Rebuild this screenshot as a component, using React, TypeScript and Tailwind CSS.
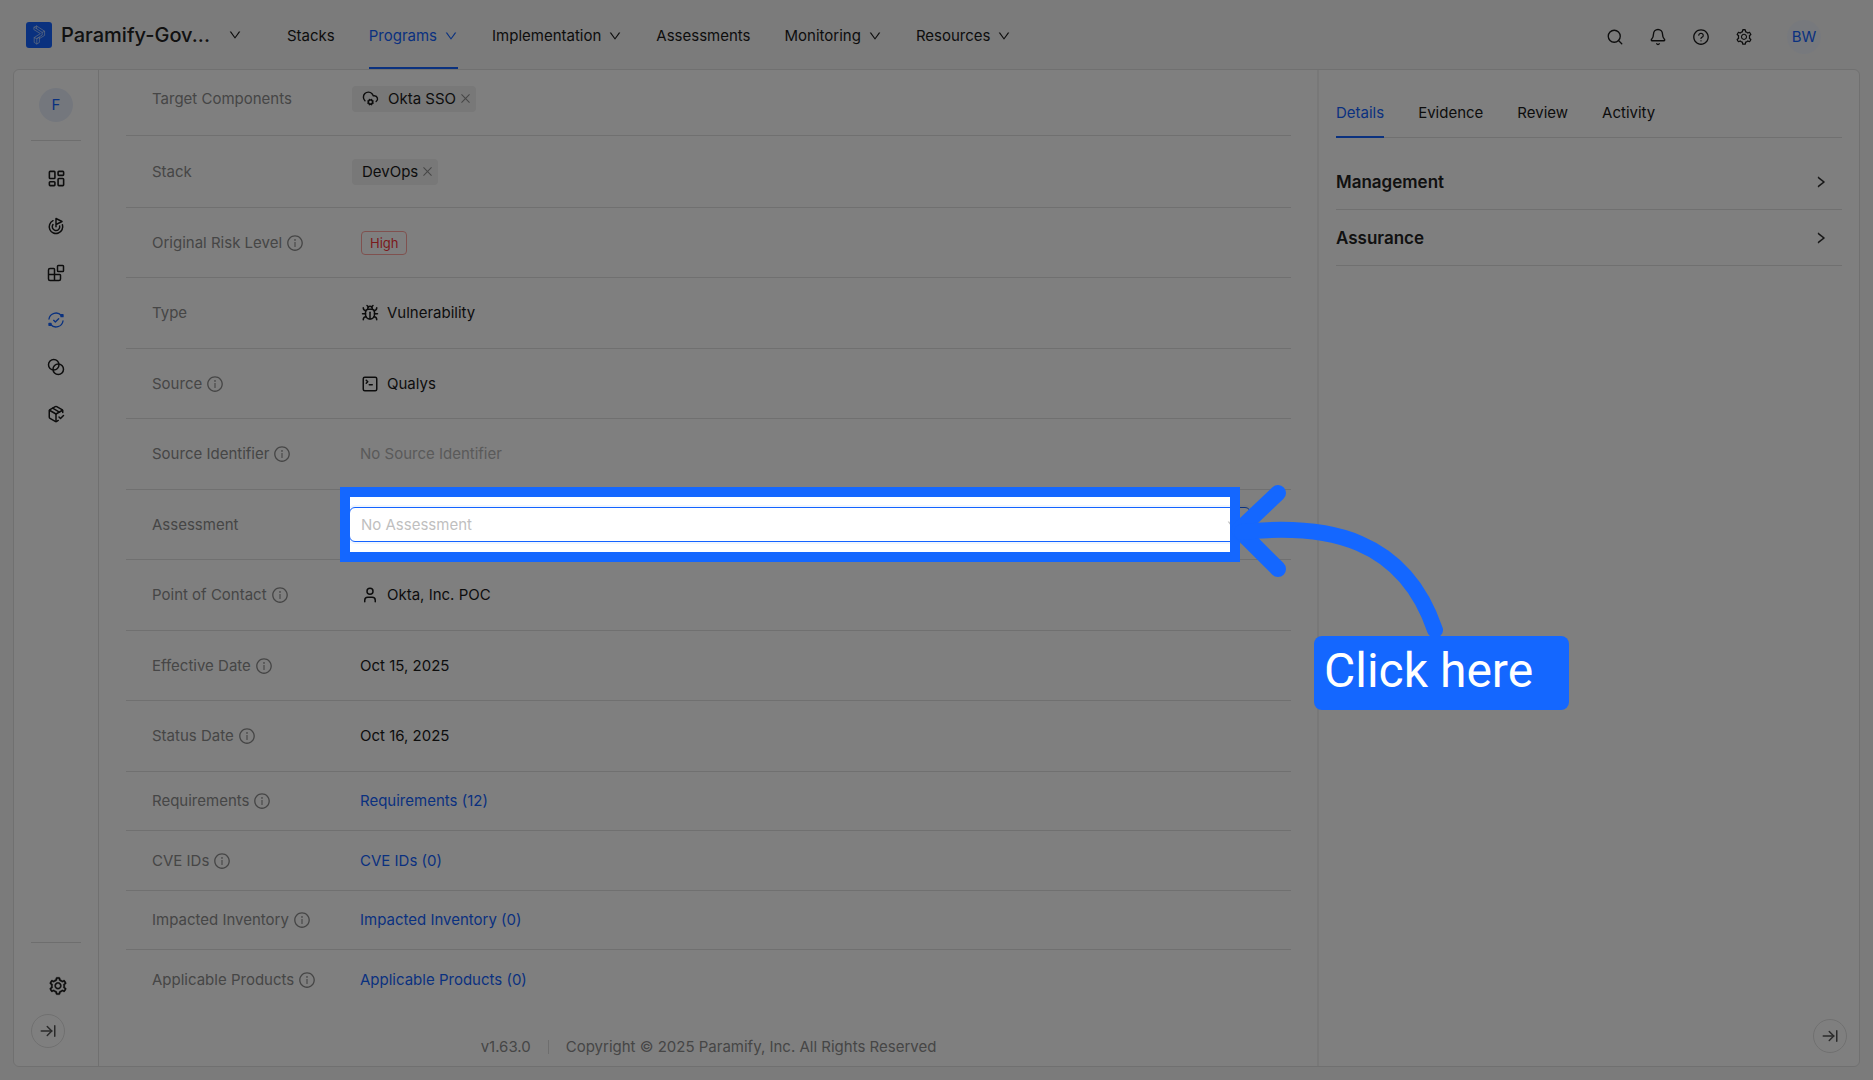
import type { ReactNode } from "react";
import {
  ArrowRightToLine,
  Bell,
  Blend,
  Blocks,
  Bug,
  CloudCog,
  Goal,
  LayoutDashboard,
  PackageCheck,
  Search,
  SquareTerminal,
  User,
} from "lucide-react";
import {
  AiOutlineClose,
  AiOutlineDown,
  AiOutlineInfoCircle,
  AiOutlineQuestionCircle,
  AiOutlineRight,
  AiOutlineSetting,
} from "react-icons/ai";

const NAV = [
  { label: "Stacks", menu: false },
  { label: "Programs", menu: true, active: true },
  { label: "Implementation", menu: true },
  { label: "Assessments", menu: false },
  { label: "Monitoring", menu: true },
  { label: "Resources", menu: true },
];

const TABS = ["Details", "Evidence", "Review", "Activity"];

const LINKS = [
  { label: "Requirements", count: 12 },
  { label: "CVE IDs", count: 0 },
  { label: "Impacted Inventory", count: 0 },
  { label: "Applicable Products", count: 0 },
];

function Logo() {
  return (
    <svg className="size-[26px] shrink-0" viewBox="0 0 26 26" fill="none">
      <rect width="26" height="26" rx="3" fill="#1463ff" />
      <g stroke="#c9dbff" strokeWidth="0.7" strokeLinejoin="round" strokeLinecap="round">
        <path d="M8.2 5.2L10.6 4L18.6 9.2V13.4L13.4 16.6V20.4L10.8 22L8.2 20.4V15.6L14.4 11.6L8.2 7.8Z" />
        <path d="M8.2 5.2L16.2 10.4V13L10.8 16.6V22M18.6 9.2L16.2 10.4M8.2 15.6L10.8 16.6L13.4 15.2V16.6M10.6 4V6.6" />
      </g>
    </svg>
  );
}

function CycleCheck() {
  return (
    <svg
      className="size-4"
      viewBox="0 0 24 24"
      fill="none"
      stroke="currentColor"
      strokeWidth="2"
      strokeLinecap="round"
      strokeLinejoin="round"
    >
      <path d="M1.5 10.5A10.6 10.6 0 0 1 20 5.2" />
      <path d="M22.5 13.5A10.6 10.6 0 0 1 4 18.8" />
      <path d="M8.5 12.5l2.5 2.5 5-5" />
      <rect x="19.5" y="4" width="3" height="3" fill="currentColor" />
      <rect x="1.5" y="17" width="3" height="3" fill="currentColor" />
    </svg>
  );
}

function RoundButton({ label }: { label: string }) {
  return (
    <button
      type="button"
      aria-label={label}
      className="flex size-[34px] items-center justify-center rounded-full border border-[#e0e0e0] text-[#555]"
    >
      <ArrowRightToLine className="size-[18px]" />
    </button>
  );
}

function Row({
  label,
  info,
  htmlFor,
  className = "",
  children,
}: {
  label: string;
  info?: boolean;
  htmlFor?: string;
  className?: string;
  children: ReactNode;
}) {
  return (
    <div
      className={`flex items-center border-b border-[#e0e0e0] pr-10 pl-[26px] ${className}`}
    >
      <div className="flex w-[197px] shrink-0 items-center gap-1 text-[#8c8c8c]">
        {htmlFor ? <label htmlFor={htmlFor}>{label}</label> : <span>{label}</span>}
        {info && <AiOutlineInfoCircle className="size-[18px]" />}
      </div>
      <div className="flex min-w-0 flex-1 items-center">{children}</div>
    </div>
  );
}

function Tag({ icon, label }: { icon?: ReactNode; label: string }) {
  return (
    <span className="ml-[3px] flex h-[26px] items-center rounded bg-[#f0f0f0] pr-1 pl-[10px]">
      {icon}
      {label}
      <button type="button" aria-label={`Remove ${label}`} className="ml-[3px]">
        <AiOutlineClose className="size-[13px] text-[#8c8c8c]" />
      </button>
    </span>
  );
}

function IconValue({ icon, label }: { icon: ReactNode; label: string }) {
  return (
    <span className="flex items-center gap-2 pl-[12px]">
      {icon}
      {label}
    </span>
  );
}

// Dims the whole page except the field it is placed over
function Spotlight() {
  return (
    <div className="pointer-events-none absolute -inset-y-5 right-[11px] -left-[9px] z-20 border-10 border-[#1467ff] shadow-[0_0_0_3000px_rgba(0,0,0,0.5)]">
      <svg
        className="absolute top-1/2 left-full -mt-12 -ml-2 h-36 w-56 overflow-visible"
        viewBox="0 0 224 144"
        fill="none"
        stroke="#1467ff"
        strokeWidth="16"
        strokeLinecap="round"
        strokeLinejoin="round"
      >
        <path d="M56 16L17 53L56 92" />
        <path d="M20 55C107 46 182 62 213 153" />
      </svg>
      <div className="absolute top-[139px] left-full ml-[84px] flex h-[74px] w-[255px] items-center rounded-lg bg-[#1467ff] pb-1 pl-[10px] font-[Roboto,'Liberation_Sans',sans-serif] text-5xl whitespace-nowrap text-white">
        Click here
      </div>
    </div>
  );
}

function Header() {
  return (
    <header className="flex h-[69px] items-center pr-[52px] pl-[26px]">
      <Logo />
      <span className="ml-[9px] text-[20px] font-medium text-[#222]">Paramify-Gov...</span>
      <button type="button" aria-label="Switch workspace" className="ml-[18px]">
        <AiOutlineDown className="size-3.5" />
      </button>
      <nav className="ml-[45px] flex h-full gap-[34px]">
        {NAV.map((item) => (
          <a
            key={item.label}
            href="#"
            className={`flex items-center gap-[7px] border-b-2 pt-1 ${
              item.active ? "border-[#1463ff] text-[#1463ff]" : "border-transparent"
            }`}
          >
            {item.label}
            {item.menu && <AiOutlineDown className="size-3.5" />}
          </a>
        ))}
      </nav>
      <div className="ml-auto flex items-center gap-[25px] pt-1">
        <button type="button" aria-label="Search">
          <Search className="size-[18px]" strokeWidth={1.8} />
        </button>
        <button type="button" aria-label="Notifications">
          <Bell className="size-[18px]" strokeWidth={1.8} />
        </button>
        <button type="button" aria-label="Help">
          <AiOutlineQuestionCircle className="size-[18px]" />
        </button>
        <button type="button" aria-label="Settings">
          <AiOutlineSetting className="size-[18px]" />
        </button>
        <button
          type="button"
          className="ml-[9px] flex size-[34px] items-center justify-center rounded-full bg-[#eff3fb] text-[#1463ff]"
        >
          BW
        </button>
      </div>
    </header>
  );
}

function Sidebar() {
  const icons = [
    { name: "Dashboard", icon: <LayoutDashboard className="size-[19px]" /> },
    { name: "Goals", icon: <Goal className="size-[18px]" /> },
    { name: "Components", icon: <Blocks className="size-[18px]" /> },
    { name: "Issues", icon: <CycleCheck />, active: true },
    { name: "Mappings", icon: <Blend className="size-[18px]" /> },
    { name: "Packages", icon: <PackageCheck className="size-[18px]" /> },
  ];
  return (
    <aside className="flex w-[85px] shrink-0 flex-col items-center border-r border-[#e0e0e0] py-[18px]">
      <button
        type="button"
        className="flex size-[34px] items-center justify-center rounded-full bg-[#e9effb] text-[#1463ff]"
      >
        F
      </button>
      <hr className="mt-[18px] w-[50px] border-[#dcdcdc]" />
      <div className="mt-[14px] flex flex-col">
        {icons.map(({ name, icon, active }) => (
          <button
            key={name}
            type="button"
            aria-label={name}
            className={`flex h-[47px] w-12 items-center justify-center ${active ? "text-[#1463ff]" : ""}`}
          >
            {icon}
          </button>
        ))}
      </div>
      <hr className="mt-auto w-[50px] border-[#dcdcdc]" />
      <button type="button" aria-label="Settings" className="mt-[33px] mb-[18px] ml-1">
        <AiOutlineSetting className="size-5" stroke="currentColor" strokeWidth="20" />
      </button>
      <div className="mr-4">
        <RoundButton label="Expand sidebar" />
      </div>
    </aside>
  );
}

function IssueFields() {
  return (
    <main className="flex min-w-0 flex-1 flex-col pr-[26px] pl-[27px]">
      <Row label="Target Components" className="h-[66px] pb-2">
        <Tag icon={<CloudCog className="mr-[9px] size-[17px]" />} label="Okta SSO" />
      </Row>
      <Row label="Stack" className="h-[72px]">
        <Tag label="DevOps" />
      </Row>
      <div>
        <Row label="Original Risk Level" info className="h-[70px]">
          <span className="ml-[12px] flex h-6 items-center rounded border border-[#ffa39e] px-2 text-[13px] text-[#f5373b]">
            High
          </span>
        </Row>
        <Row label="Type" className="h-[71px]">
          <IconValue icon={<Bug className="size-[18px]" />} label="Vulnerability" />
        </Row>
        <Row label="Source" info className="h-[70px]">
          <IconValue icon={<SquareTerminal className="size-[18px]" />} label="Qualys" />
        </Row>
        <Row label="Source Identifier" info className="h-[71px]">
          <span className="pl-[11px] text-[#b4b4b4]">No Source Identifier</span>
        </Row>
        <Row label="Assessment" htmlFor="assessment" className="h-[70px]">
          <div className="relative w-full">
            <select
              id="assessment"
              className="block h-[35px] w-full appearance-none rounded-md border border-[#1463ff] bg-white px-[11px] text-[#bfbfbf] shadow-[0_0_0_2px_rgba(5,99,255,0.06)] outline-none"
            >
              <option>No Assessment</option>
            </select>
            <AiOutlineDown className="absolute top-1/2 right-[11px] size-3.5 -translate-y-1/2 text-[#bfbfbf]" />
            <Spotlight />
          </div>
        </Row>
        <Row label="Point of Contact" info className="h-[71px]">
          <IconValue icon={<User className="size-[18px]" />} label="Okta, Inc. POC" />
        </Row>
        <Row label="Effective Date" info className="h-[70px]">
          <span className="pl-[11px]">Oct 15, 2025</span>
        </Row>
        <Row label="Status Date" info className="h-[71px]">
          <span className="pl-[11px]">Oct 16, 2025</span>
        </Row>
      </div>
      <div>
        {LINKS.map(({ label, count }) => (
          <Row
            key={label}
            label={label}
            info
            className="odd:h-[59px] even:h-[60px] last:border-b-0"
          >
            <a href="#" className="pl-[11px] text-[#1463ff]">
              {label} ({count})
            </a>
          </Row>
        ))}
      </div>
      <footer className="mt-auto flex items-center justify-center gap-[17px] pb-2 text-[#8c8c8c]">
        <span>v1.63.0</span>
        <span className="h-3.5 w-px bg-[#dcdcdc]" />
        <span>Copyright © 2025 Paramify, Inc. All Rights Reserved</span>
      </footer>
    </main>
  );
}

function DetailPanel() {
  return (
    <aside className="flex w-[542px] shrink-0 flex-col border-l-2 border-[#f0f0f0] px-[17px]">
      <div role="tablist" className="flex h-[68px] gap-[34px] border-b border-[#e0e0e0] pt-5">
        {TABS.map((tab, i) => (
          <button
            key={tab}
            type="button"
            role="tab"
            aria-selected={i === 0}
            className={`-mb-px border-b-2 ${
              i === 0 ? "border-[#1463ff] text-[#1463ff]" : "border-transparent"
            }`}
          >
            {tab}
          </button>
        ))}
      </div>
      <div className="pt-4">
        {["Management", "Assurance"].map((title) => (
          <button
            key={title}
            type="button"
            className="flex h-14 w-full items-center justify-between border-b border-[#e0e0e0] pr-[14px] text-[17px] font-semibold text-[#222]"
          >
            {title}
            <AiOutlineRight className="size-3.5" stroke="currentColor" strokeWidth="30" />
          </button>
        ))}
      </div>
      <div className="mt-auto mb-[13px] -mr-[5px] self-end">
        <RoundButton label="Collapse panel" />
      </div>
    </aside>
  );
}

export default function App() {
  return (
    <div className="flex min-h-screen flex-col overflow-hidden bg-[#f6f6f6] font-[Inter,'Liberation_Sans',sans-serif] text-[15px] leading-[22px] text-[#1a1a1a]">
      <Header />
      <div className="mx-[13px] mb-[13px] flex flex-1 rounded-md border border-[#e0e0e0] bg-white">
        <Sidebar />
        <IssueFields />
        <DetailPanel />
      </div>
    </div>
  );
}
